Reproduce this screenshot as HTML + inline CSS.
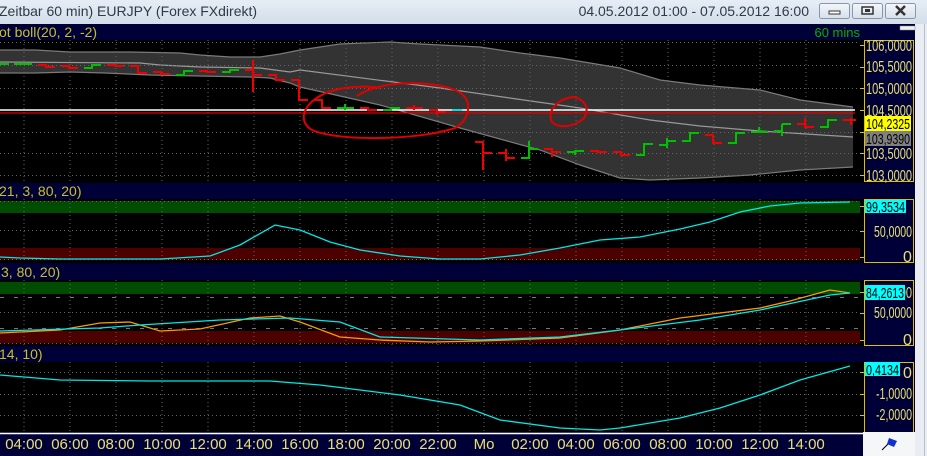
<!DOCTYPE html>
<html><head><meta charset="utf-8"><style>
html,body{margin:0;padding:0;width:927px;height:456px;overflow:hidden;background:#e9ecf2;font-family:"Liberation Sans",sans-serif}
svg{display:block}
</style></head><body>
<svg width="927" height="456" xmlns="http://www.w3.org/2000/svg" font-family="Liberation Sans, sans-serif">
<defs>
<linearGradient id="tb" x1="0" y1="0" x2="0" y2="1"><stop offset="0" stop-color="#e6edf6"/><stop offset="1" stop-color="#d3deea"/></linearGradient>
<linearGradient id="bt" x1="0" y1="0" x2="0" y2="1"><stop offset="0" stop-color="#f4f7fb"/><stop offset="1" stop-color="#d6dfea"/></linearGradient>
</defs>
<rect x="0" y="0" width="927" height="24" fill="url(#tb)"/>
<text x="-1" y="16" font-size="14" fill="#2f3a46">Zeitbar 60 min)  EURJPY (Forex FXdirekt)</text>
<text x="809" y="16" font-size="14" fill="#2f3a46" text-anchor="end">04.05.2012 01:00 - 07.05.2012 16:00</text>
<g stroke="#8a97a8" fill="url(#bt)"><rect x="819.5" y="3.5" width="30" height="15" rx="2"/><rect x="852.5" y="3.5" width="30" height="15" rx="2"/><rect x="885.5" y="3.5" width="30" height="15" rx="2"/></g>
<rect x="829" y="11" width="11" height="3" fill="#fff" stroke="#333" stroke-width="1"/>
<rect x="862" y="7" width="11" height="7" fill="none" stroke="#333" stroke-width="1.5"/><rect x="865" y="9" width="5" height="3" fill="#333"/>
<path d="M896 6 L905 15 M905 6 L896 15" stroke="#333" stroke-width="2.5"/>
<rect x="915" y="24" width="12" height="432" fill="#e9ecf2"/>
<line x1="924.5" y1="24" x2="924.5" y2="456" stroke="#b8c0cc"/>
<rect x="0" y="24" width="915" height="410" fill="#000"/>
<rect x="0" y="24" width="915" height="16" fill="#000038"/>
<text x="-1" y="37" font-size="14" fill="#c8c020">ot boll(20, 2, -2)</text>
<text x="860" y="37" font-size="13" fill="#00b000" text-anchor="end">60 mins</text>
<rect x="900" y="26" width="15" height="4" fill="#f0f0f0" stroke="#888" stroke-width="0.5"/>
<rect x="0" y="183" width="915" height="16" fill="#000038"/>
<text x="-1" y="196" font-size="14" fill="#c8c020">21, 3, 80, 20)</text>
<rect x="0" y="263" width="915" height="17" fill="#000038"/>
<text x="1" y="277" font-size="14" fill="#c8c020">3, 80, 20)</text>
<rect x="0" y="346" width="915" height="16" fill="#000038"/>
<text x="-1" y="359" font-size="14" fill="#c8c020">14, 10)</text>

<rect x="0" y="201" width="860" height="12" fill="#004c00"/>
<rect x="0" y="248" width="860" height="12" fill="#4c0000"/>
<rect x="0" y="282" width="860" height="12" fill="#004c00"/>
<rect x="0" y="331" width="860" height="12" fill="#4c0000"/>

<path d="M0 50 L35 50 L70 52 L130 52 L180 53 L200 55 L230 57 L260 57 L280 54 L300 50 L340 44 L390 42 L420 44 L480 47 L520 53 L560 58 L620 68 L660 80 L700 85 L760 90 L800 100 L853 107 L853 167 L800 170 L750 175 L700 178 L650 180 L620 178 L580 165 L540 150 L460 128 L380 105 L300 87 L290 83 L270 78 L250 77 L200 76 L150 75 L105 73 L70 72 L35 73 L0 73 Z" fill="#333"/>
<g fill="none" stroke="#7a7a7a" stroke-width="1.2">
<path d="M0 50 L35 50 L70 52 L130 52 L180 53 L200 55 L230 57 L260 57 L280 54 L300 50 L340 44 L390 42 L420 44 L480 47 L520 53 L560 58 L620 68 L660 80 L700 85 L760 90 L800 100 L853 107"/>
<path d="M0 73 L35 73 L70 72 L105 73 L150 75 L200 76 L250 77 L270 78 L290 83 L300 87 L380 105 L460 128 L540 150 L580 165 L620 178 L650 180 L700 178 L750 175 L800 170 L853 167"/>
<path d="M0 62 L140 63 L160 65 L200 67 L260 68 L290 72 L300 70 L440 88 L580 108 L650 120 L700 126 L760 131 L853 137" stroke="#999"/>
</g>

<g stroke="#666" stroke-width="1" stroke-dasharray="1,3">
<path d="M24 40V183M70 40V183M116 40V183M162 40V183M208 40V183M254 40V183M300 40V183M346 40V183M392 40V183M438 40V183M484 40V183M530 40V183M576 40V183M622 40V183M668 40V183M714 40V183M760 40V183M806 40V183"/>
<path d="M24 199V263M70 199V263M116 199V263M162 199V263M208 199V263M254 199V263M300 199V263M346 199V263M392 199V263M438 199V263M484 199V263M530 199V263M576 199V263M622 199V263M668 199V263M714 199V263M760 199V263M806 199V263"/>
<path d="M24 280V346M70 280V346M116 280V346M162 280V346M208 280V346M254 280V346M300 280V346M346 280V346M392 280V346M438 280V346M484 280V346M530 280V346M576 280V346M622 280V346M668 280V346M714 280V346M760 280V346M806 280V346"/>
<path d="M24 362V432M70 362V432M116 362V432M162 362V432M208 362V432M254 362V432M300 362V432M346 362V432M392 362V432M438 362V432M484 362V432M530 362V432M576 362V432M622 362V432M668 362V432M714 362V432M760 362V432M806 362V432"/>
<path d="M0 42.5H860M0 65.5H860M0 88.5H860M0 132.5H860M0 153.5H860M0 175.5H860"/>
<path d="M0 201.5H860M0 230.5H860M0 259.5H860"/>
<path d="M0 312.5H860M0 343.5H860"/>
<path d="M0 372.5H860M0 394.5H860M0 415.5H860"/>
</g>
<g stroke="#777" stroke-dasharray="4,10"><path d="M0 297.5H860M0 328.5H860"/></g>

<line x1="0" y1="110" x2="855" y2="110" stroke="#fff" stroke-width="1.5"/>
<line x1="0" y1="113" x2="855" y2="113" stroke="#e00000" stroke-width="1.2"/>

<g stroke-width="2" fill="none">
<g stroke="#00c000">
<path d="M-8 64H9M14 64H32M84 68H92V65H101M176 75H184V71H193M222 72H230V70H239M337 108H345V104V110V108H354M383 110H391V108H400"/>
<path d="M521 158H529V141M529 149H538M567 152H575V150V155M575 151H584M636 155H644V144H653M659 145H667V138V148M667 141H676M682 141H690V132V141M690 133H699M728 143H736V133H745M751 132H759V127V133M759 132H768M774 131H782V124V136M782 124H791M820 127H828V119V128M828 120H837"/>
</g>
<g stroke="#f00000">
<path d="M38 65H46V67H55M61 66H69V68H78M107 65H115V66H124M130 66H138V73H147M153 72H161V74H170M199 71H207V72H216M245 70H253V60V92M253 75H262M268 75H276V80H285M291 80H299V100H308M314 100H322V108H331M360 108H368V110H377M406 108H414V105V110M414 108H423M429 110H437V115M437 112H446"/>
<path d="M475 142H483V170M483 153H492M498 153H506V149V161M506 158H515M544 149H552V157M552 152H561M590 151H598V152H607M613 152H621V156M621 155H630M705 135H713V144M713 143H722M797 124H805V118V128M805 127H814M843 120H851V118V125M851 120H856"/>
</g>
<path d="M452 110H462" stroke="#00e0e0"/>
</g>

<g fill="none" stroke="#e00000" stroke-width="2">
<path d="M357 96 C 380 80, 430 80, 455 90 C 475 98, 470 120, 455 128 C 420 140, 340 142, 312 130 C 295 120, 305 98, 335 90 C 350 86, 370 86, 380 88"/>
<path d="M574 97 C 560 98, 548 108, 551 120 C 556 130, 575 127, 584 118 C 590 108, 585 100, 574 97"/>
</g>

<path d="M0 257 L20 258 L60 259 L160 259 L210 256 L240 245 L275 225 L300 230 L330 242 L360 250 L400 256 L440 259 L480 259 L520 255 L560 248 L600 240 L640 237 L680 229 L710 222 L740 212 L770 206 L800 203 L850 202" fill="none" stroke="#00e8e8" stroke-width="1.3"/>
<path d="M0 333 L60 330 L100 323 L130 322 L160 331 L200 329 L250 318 L280 316 L300 322 L340 337 L380 340 L430 342 L480 341 L560 338 L620 330 L680 318 L760 308 L790 301 L830 290 L850 293" fill="none" stroke="#ff9a00" stroke-width="1.3"/>
<path d="M0 331 L100 328 L140 325 L220 320 L290 318 L340 322 L380 337 L480 340 L560 337 L620 330 L700 320 L760 310 L830 295 L850 293" fill="none" stroke="#00e8e8" stroke-width="1.3"/>
<path d="M0 375 L60 380 L150 381 L270 381 L320 385 L400 395 L460 405 L500 420 L560 428 L600 430 L620 428 L680 418 L720 408 L760 395 L800 380 L850 366" fill="none" stroke="#00e8e8" stroke-width="1.3"/>

<g fill="#000038" stroke="#e0c000" stroke-width="1">
<rect x="864.5" y="40.5" width="49" height="141"/>
<rect x="864.5" y="199.5" width="49" height="63"/>
<rect x="864.5" y="280.5" width="49" height="65"/>
<rect x="864.5" y="362.5" width="49" height="70"/>
</g>
<g stroke="#e0c000" stroke-width="1">
<path d="M860 45.5h5M860 67.5h5M860 88.5h5M860 110.5h5M860 132.5h5M860 153.5h5M860 175.5h5M860 206.5h5M860 231.5h5M860 257.5h5M860 292.5h5M860 313.5h5M860 340.5h5M860 372.5h5M860 394.5h5M860 415.5h5"/>
</g>
<g font-size="16" fill="#e8e070">
<text x="866" y="51" textLength="46" lengthAdjust="spacingAndGlyphs">106,0000</text>
<text x="866" y="72" textLength="46" lengthAdjust="spacingAndGlyphs">105,5000</text>
<text x="866" y="94" textLength="46" lengthAdjust="spacingAndGlyphs">105,0000</text>
<text x="866" y="116" textLength="46" lengthAdjust="spacingAndGlyphs">104,5000</text>
<text x="866" y="159" textLength="46" lengthAdjust="spacingAndGlyphs">103,5000</text>
<text x="866" y="181" textLength="46" lengthAdjust="spacingAndGlyphs">103,0000</text>
<text x="874" y="237" textLength="38" lengthAdjust="spacingAndGlyphs">50,0000</text>
<text x="903" y="262">0</text>
<text x="866" y="298" textLength="46" lengthAdjust="spacingAndGlyphs">100,0000</text>
<text x="874" y="318" textLength="38" lengthAdjust="spacingAndGlyphs">50,0000</text>
<text x="903" y="345">0</text>
<text x="903" y="378">0</text>
<text x="876" y="399" textLength="36" lengthAdjust="spacingAndGlyphs">-1,0000</text>
<text x="876" y="420" textLength="36" lengthAdjust="spacingAndGlyphs">-2,0000</text>
</g>
<rect x="865" y="116" width="46" height="15" fill="#ffff00"/>
<text x="866" y="129" font-size="15" fill="#000" textLength="44" lengthAdjust="spacingAndGlyphs">104,2325</text>
<rect x="865" y="131" width="46" height="15" fill="#808080"/>
<text x="866" y="144" font-size="15" fill="#000" textLength="44" lengthAdjust="spacingAndGlyphs">103,9390</text>
<rect x="865" y="200" width="41" height="13" fill="#00ffff"/>
<text x="866" y="212" font-size="15" fill="#000" textLength="39" lengthAdjust="spacingAndGlyphs">99,3534</text>
<rect x="865" y="285" width="40" height="15" fill="#00ffff"/>
<text x="866" y="298" font-size="15" fill="#000" textLength="38" lengthAdjust="spacingAndGlyphs">84,2613</text>
<rect x="865" y="362" width="35" height="14" fill="#00ffff"/>
<text x="866" y="375" font-size="15" fill="#000" textLength="33" lengthAdjust="spacingAndGlyphs">0,4134</text>

<rect x="0" y="432" width="863" height="24" fill="#000038"/>
<line x1="0" y1="433.5" x2="863" y2="433.5" stroke="#fff" stroke-width="1.5"/>
<g font-size="15" fill="#e8e070" text-anchor="middle">
<text x="24" y="449">04:00</text><text x="70" y="449">06:00</text><text x="116" y="449">08:00</text><text x="162" y="449">10:00</text><text x="208" y="449">12:00</text><text x="254" y="449">14:00</text><text x="300" y="449">16:00</text><text x="346" y="449">18:00</text><text x="392" y="449">20:00</text><text x="438" y="449">22:00</text><text x="484" y="449">Mo</text><text x="530" y="449">02:00</text><text x="576" y="449">04:00</text><text x="622" y="449">06:00</text><text x="668" y="449">08:00</text><text x="714" y="449">10:00</text><text x="760" y="449">12:00</text><text x="806" y="449">14:00</text>
</g>
<rect x="863" y="432" width="52" height="24" fill="#f4f6f8"/>
<path d="M882 450 L892 440" stroke="#000" stroke-width="1"/>
<path d="M889 438 L897 441 L894 447 L887 444 Z" fill="#1030d0"/>
</svg>
</body></html>
